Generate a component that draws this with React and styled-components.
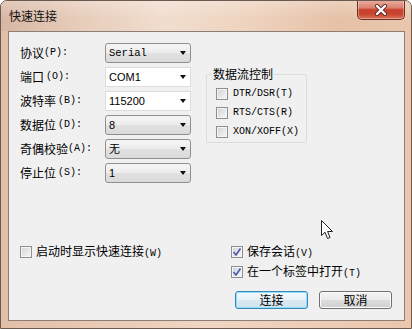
import React from 'react'
import styled, { createGlobalStyle } from 'styled-components'

const GlobalStyle = createGlobalStyle`
    html, body {
        margin: 0;
        padding: 0;
        background: #ffffff;
    }
    body {
        font-family: "Noto Sans CJK SC", "Liberation Sans", sans-serif;
        font-size: 12px;
        color: #000;
    }
`

const Window = styled.div `
    position: relative;
    width: 412px;
    height: 329px;
    box-sizing: border-box;
    border: 1px solid #6a5a50;
    border-radius: 7px 7px 0 0;
    background: #ebc8b0;
    display: flex;
    flex-direction: column;
    overflow: hidden;
`

const TitleBar = styled.div `
    height: 30px;
    flex: 0 0 30px;
    display: flex;
    justify-content: space-between;
    align-items: flex-start;
    padding-left: 8px;
    padding-right: 6px;
    background:
        linear-gradient(to bottom, rgba(255,255,255,0.25) 0%, rgba(255,255,255,0) 60%),
        linear-gradient(to right, #d7b7a4 0%, #e6cbb9 18%, #f1ddce 40%, #eed3bf 60%, #e6c1a7 82%, #e9c6ad 100%);
`

const Title = styled.span `
    margin-top: 7px;
    font-size: 12px;
    line-height: 16px;
    color: #111;
`

const CloseButton = styled.div `
    width: 48px;
    height: 20px;
    box-sizing: border-box;
    margin-top: -1px;
    border: 1px solid #6b3026;
    border-top: none;
    border-radius: 0 0 5px 5px;
    display: flex;
    align-items: center;
    justify-content: center;
    background: linear-gradient(to bottom, #eab0a2 0%, #dc8270 40%, #c8402c 52%, #c9452f 75%, #d9735a 100%);
    box-shadow: inset 0 0 0 1px rgba(255,255,255,0.35);
`

const Frame = styled.div `
    flex: 1;
    display: flex;
    padding: 0 6px 7px 7px;
    background: linear-gradient(to right, #e2bfa8 0%, #efd6c4 50%, #ebc6ad 100%);
`

const Client = styled.div `
    position: relative;
    flex: 1;
    display: flex;
    flex-direction: column;
    justify-content: space-between;
    background: #f0f0f0;
    border: 1px solid #8d7e75;
    padding: 11px 12px 11px 11px;
`

const TopSection = styled.div `
    display: flex;
    align-items: flex-start;
`

const Form = styled.div `
    display: grid;
    grid-template-columns: 85px 86px;
    grid-auto-rows: 20px;
    row-gap: 4px;
`

const Label = styled.div `
    display: flex;
    align-items: center;
    font-size: 12px;
    line-height: 14px;
    white-space: nowrap;
`

const Key = styled.span `
    font-family: "Liberation Mono", monospace;
    font-size: 10px;
    margin-left: ${props => props.$gap || 0}px;
`

const Combo = styled.div `
    box-sizing: border-box;
    height: 20px;
    display: flex;
    align-items: center;
    justify-content: space-between;
    padding: 0 4px 0 3px;
    border: 1px solid ${props => props.$edit ? '#dcdcdc' : '#8f8f8f'};
    border-radius: ${props => props.$edit ? '0' : '3px'};
    background: ${props => props.$edit
        ? '#ffffff'
        : 'linear-gradient(to bottom, #f6f6f6 0%, #ececec 50%, #e1e1e1 51%, #dadada 100%)'};
`

const Value = styled.span `
    font-family: ${props => props.$mono ? '"Liberation Mono", monospace' : '"Liberation Sans", "Noto Sans CJK SC", sans-serif'};
    font-size: ${props => props.$mono ? '10.5px' : '11px'};
    line-height: 12px;
`

const Arrow = styled.span `
    width: 0;
    height: 0;
    border-left: 3.5px solid transparent;
    border-right: 3.5px solid transparent;
    border-top: 4px solid #111;
`

const GroupBox = styled.fieldset `
    margin: 24px 0 0 15px;
    width: 101px;
    box-sizing: border-box;
    border: 1px solid #d9dde2;
    border-radius: 2px;
    padding: 3px 4px 1px 9px;
    min-width: 0;
`

const Legend = styled.legend `
    padding: 0 1px;
    margin-left: -4px;
    font-size: 12px;
    line-height: 14px;
`

const CheckRow = styled.div `
    display: flex;
    align-items: center;
    gap: ${props => props.$gap || 4}px;
    height: ${props => props.$height || 20}px;
    white-space: nowrap;
`

const Box = styled.span `
    flex: 0 0 auto;
    width: 12px;
    height: 12px;
    box-sizing: border-box;
    border: 1px solid #8e8f8f;
    display: flex;
    align-items: center;
    justify-content: center;
    background: linear-gradient(135deg, #cfd2d6 0%, #e6e7e9 55%, #f7f7f7 100%);
    box-shadow: inset 0 0 0 1px #f4f4f4;
`

const CheckText = styled.span `
    font-family: ${props => props.$mono ? '"Liberation Mono", monospace' : '"Noto Sans CJK SC", sans-serif'};
    font-size: ${props => props.$mono ? '10px' : '12px'};
    line-height: 14px;
`

const BottomSection = styled.div `
    display: flex;
    justify-content: space-between;
    align-items: flex-start;
`

const RightColumn = styled.div `
    width: 161px;
    display: flex;
    flex-direction: column;
`

const ButtonRow = styled.div `
    display: flex;
    justify-content: flex-end;
    gap: 11px;
    margin-top: 9px;
`

const Button = styled.div `
    width: 73px;
    height: 18px;
    box-sizing: border-box;
    display: flex;
    align-items: center;
    justify-content: center;
    font-size: 12px;
    line-height: 14px;
    border-radius: 3px;
    border: 1px solid ${props => props.$default ? '#3c86c0' : '#707070'};
    background: ${props => props.$default
        ? 'linear-gradient(to bottom, #f4f9fc 0%, #e8f1f7 50%, #dae8f1 51%, #d1e3ef 100%)'
        : 'linear-gradient(to bottom, #f3f3f3 0%, #ebebeb 50%, #dddddd 51%, #d0d0d0 100%)'};
    box-shadow: ${props => props.$default
        ? 'inset 0 0 0 1px #8fe0fb'
        : 'inset 0 0 0 1px #fbfbfb'};
`

const Cursor = styled.svg `
    position: absolute;
    left: 312px;
    top: 188px;
`

const CloseGlyph = () => (
    <svg width="14" height="12" viewBox="0 0 14 12">
        <path d="M3 2 L11 10 M11 2 L3 10" stroke="#5a2a22" strokeWidth="4" strokeLinecap="round" />
        <path d="M3 2 L11 10 M11 2 L3 10" stroke="#ffffff" strokeWidth="2.4" strokeLinecap="round" />
    </svg>
)

const CheckMark = () => (
    <svg width="10" height="10" viewBox="0 0 10 10">
        <path d="M1.5 5 L4 8 L8.5 1.5" fill="none" stroke="#4b57a8" strokeWidth="1.6" />
    </svg>
)

const Checkbox = ({ checked, mono, children }) => (
    <CheckRow>
        <Box>{ checked && <CheckMark /> }</Box>
        <CheckText $mono={ mono }>{ children }</CheckText>
    </CheckRow>
)

const fields = [
    { label: '协议', key: '(P):', value: 'Serial', mono: true },
    { label: '端口', key: '(O):', value: 'COM1', edit: true, gap: 2 },
    { label: '波特率', key: '(B):', value: '115200', edit: true, gap: 2 },
    { label: '数据位', key: '(D):', value: '8', gap: 2 },
    { label: '奇偶校验', key: '(A):', value: '无' },
    { label: '停止位', key: '(S):', value: '1', gap: 2 },
]

const App = () => (
    <>
        <GlobalStyle />
        <Window>
            <TitleBar>
                <Title>快速连接</Title>
                <CloseButton><CloseGlyph /></CloseButton>
            </TitleBar>
            <Frame>
                <Client>
                    <TopSection>
                        <Form>
                            { fields.map((f) => (
                                <React.Fragment key={ f.label }>
                                    <Label>{ f.label }<Key $gap={ f.gap }>{ f.key }</Key></Label>
                                    <Combo $edit={ f.edit }>
                                        <Value $mono={ f.mono }>{ f.value }</Value>
                                        <Arrow />
                                    </Combo>
                                </React.Fragment>
                            )) }
                        </Form>
                        <GroupBox>
                            <Legend>数据流控制</Legend>
                            <CheckRow $height={ 19 } $gap={ 5 }><Box /><CheckText $mono>DTR/DSR(T)</CheckText></CheckRow>
                            <CheckRow $height={ 19 } $gap={ 5 }><Box /><CheckText $mono>RTS/CTS(R)</CheckText></CheckRow>
                            <CheckRow $height={ 19 } $gap={ 5 }><Box /><CheckText $mono>XON/XOFF(X)</CheckText></CheckRow>
                        </GroupBox>
                    </TopSection>
                    <BottomSection>
                        <CheckRow>
                            <Box />
                            <CheckText>启动时显示快速连接<Key>(W)</Key></CheckText>
                        </CheckRow>
                        <RightColumn>
                            <Checkbox checked>保存会话<Key>(V)</Key></Checkbox>
                            <Checkbox checked>在一个标签中打开<Key>(T)</Key></Checkbox>
                            <ButtonRow>
                                <Button $default>连接</Button>
                                <Button>取消</Button>
                            </ButtonRow>
                        </RightColumn>
                    </BottomSection>
                    <Cursor width="13" height="20" viewBox="0 0 13 20">
                        <path d="M0.5 0.5 L0.5 15.5 L4 12.2 L6.5 18.5 L9 17.5 L6.6 11.5 L11.5 11.5 Z" fill="#ffffff" stroke="#222" strokeWidth="1" strokeLinejoin="round" />
                    </Cursor>
                </Client>
            </Frame>
        </Window>
    </>
)

export default App
